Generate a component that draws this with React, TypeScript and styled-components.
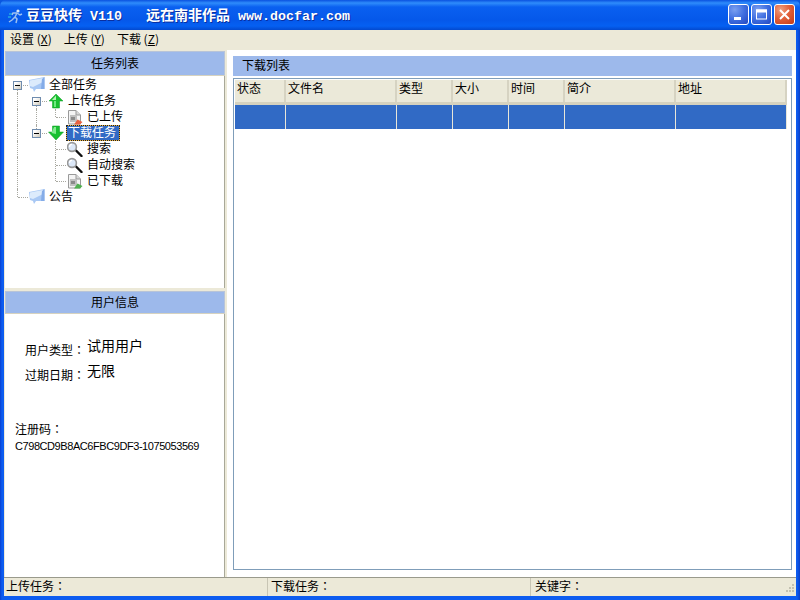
import React from "react";
import styled, { createGlobalStyle } from "styled-components";

const GlobalStyle = createGlobalStyle`
  html, body {
    margin: 0;
    padding: 0;
    background: #0a57e0;
  }
  * {
    box-sizing: border-box;
  }
`;

const UI_FONT = `"Noto Sans CJK SC", "Liberation Sans", sans-serif`;
const COLON_FONT = `"Noto Sans CJK TC", "Liberation Sans", sans-serif`;

const Window = styled.div`
  width: 800px;
  height: 600px;
  display: flex;
  flex-direction: column;
  overflow: hidden;
  padding: 0 4px 4px;
  background: linear-gradient(90deg, #0a3fd0 0, #0d5cf0 2px, #0d5cf0 calc(100% - 3px), #0a3fc8 100%);
  font: 12px/16px ${UI_FONT};
  color: #000;
  border-radius: 6px 6px 0 0;
`;

const TitleBar = styled.div`
  flex: 0 0 30px;
  margin: 0 -4px;
  padding: 1px 5px 0 7px;
  display: flex;
  align-items: center;
  background: linear-gradient(180deg, #0a52e0 0, #2f8cfb 3px, #0a60f0 7px, #0558ea 20px, #0560f2 26px, #0349cf 30px);
`;

const TitleIcon = styled.svg`
  width: 16px;
  height: 16px;
  flex: none;
  margin-right: 3px;
`;

const TitleText = styled.div`
  color: #fff;
  text-shadow: 1px 1px 0 #0a2fa0;
  white-space: pre;
  line-height: 18px;
`;

const TitleCjk = styled.span<{ $left?: number }>`
  font: bold 14px/18px "Noto Sans CJK SC", serif;
  margin-left: ${(p) => p.$left ?? 0}px;
`;

const TitleLatin = styled.span<{ $left: number }>`
  font: bold 13.33px/18px "Liberation Mono", monospace;
  margin-left: ${(p) => p.$left}px;
`;

const CaptionButtons = styled.div`
  margin-left: auto;
  display: flex;
  gap: 2px;
  margin-top: -2px;
`;

const CaptionButton = styled.div<{ $close?: boolean }>`
  width: 21px;
  height: 21px;
  border: 1px solid #fff;
  border-radius: 3px;
  display: flex;
  align-items: center;
  justify-content: center;
  background: ${(p) =>
    p.$close
      ? "radial-gradient(circle at 30% 25%, #f0a080 0, #e2603a 45%, #c23a16 100%)"
      : "radial-gradient(circle at 30% 25%, #7a9ff0 0, #3f6ee0 50%, #2348c0 100%)"};
`;

const MenuBar = styled.div`
  flex: 0 0 20px;
  display: flex;
  padding-left: 6px;
  gap: 12px;
  align-items: flex-start;
  background: #ece9d8;
`;

const MenuItem = styled.span`
  line-height: 18px;
  white-space: pre;
`;

const Mnemonic = styled.span`
  text-decoration: underline;
`;

const Body = styled.div`
  flex: 1;
  min-height: 0;
  display: flex;
  background: #ece9d8;
`;

const LeftColumn = styled.div`
  width: 221px;
  flex: none;
  padding: 1px 0 0 1px;
  display: flex;
  flex-direction: column;
`;

const PaneHeader = styled.div<{ $height: number }>`
  flex: 0 0 ${(p) => p.$height}px;
  background: #9db9eb;
  border: 1px solid #b8c4d8;
  border-bottom-color: #d6d2bf;
  text-align: center;
  line-height: ${(p) => p.$height - 4}px;
`;

const TreePane = styled.div`
  flex: 0 0 212px;
  background: #fff;
  padding: 1px 0 0 3px;
  border-right: 1px solid #a8a898;
`;

const Splitter = styled.div`
  flex: 0 0 3px;
`;

const TreeRow = styled.div`
  display: flex;
  height: 16px;
  align-items: center;
  white-space: nowrap;
`;

const Guide = styled.div<{ $up?: boolean; $down?: boolean; $right?: boolean }>`
  position: relative;
  flex: none;
  width: 19px;
  height: 16px;
  &::before {
    content: "";
    position: absolute;
    left: 9px;
    top: ${(p) => (p.$up ? 0 : 8)}px;
    bottom: ${(p) => (p.$down ? 0 : 8)}px;
    border-left: 1px dotted #a8a8a0;
  }
  &::after {
    content: "";
    position: absolute;
    left: 10px;
    top: 8px;
    width: ${(p) => (p.$right ? 10 : 0)}px;
    border-top: ${(p) => (p.$right ? "1px dotted #a8a8a0" : "none")};
  }
`;

const Expander = styled.div`
  position: absolute;
  left: 5px;
  top: 4px;
  width: 9px;
  height: 9px;
  border: 1px solid #6f8cae;
  background: linear-gradient(135deg, #fff 20%, #cfcabb);
  z-index: 1;
  &::after {
    content: "";
    position: absolute;
    left: 1px;
    top: 3px;
    width: 5px;
    height: 1px;
    background: #000;
  }
`;

const NodeIcon = styled.svg`
  position: relative;
  width: 16px;
  height: 16px;
  flex: none;
  margin-left: 2px;
`;

const NodeLabel = styled.span<{ $selected?: boolean }>`
  margin-left: 2px;
  padding: 0 4px 2px 2px;
  line-height: 14px;
  color: ${(p) => (p.$selected ? "#fff" : "#000")};
  background: ${(p) => (p.$selected ? "#316ac5" : "transparent")};
  box-shadow: ${(p) => (p.$selected ? "inset 0 0 0 1px #e8b040" : "none")};
  outline: ${(p) => (p.$selected ? "1px dotted #222" : "none")};
  outline-offset: -1px;
`;

const InfoPane = styled.div`
  flex: 1;
  background: #fff;
  padding: 24px 0 0 10px;
  border-right: 1px solid #a8a898;
  display: flex;
  flex-direction: column;
`;

const InfoRow = styled.div`
  display: flex;
  height: 25px;
  padding-left: 10px;
`;

const InfoKey = styled.span`
  width: 62px;
  padding-top: 4px;
  flex: none;
  font-family: ${COLON_FONT};
`;

const InfoValue = styled.span`
  font-size: 14px;
  line-height: 16px;
  margin-top: -1px;
`;

const RegKey = styled.div`
  margin-top: 33px;
  line-height: 16px;
  font-family: ${COLON_FONT};
`;

const RegCode = styled.div`
  font: 11px/14px "Liberation Sans", sans-serif;
  letter-spacing: -0.43px;
  margin-top: 2px;
`;

const RightColumn = styled.div`
  flex: 1;
  min-width: 0;
  margin-left: 2px;
  background: #fff;
  padding: 6px 4px 7px 6px;
  display: flex;
  flex-direction: column;
`;

const ListTitle = styled.div`
  flex: 0 0 20px;
  background: #9db9eb;
  padding-left: 9px;
  line-height: 18px;
`;

const ListView = styled.div`
  flex: 1;
  margin-top: 2px;
  border: 1px solid #7f9db9;
  padding: 1px;
  background: #fff;
`;

const ColumnHeader = styled.div`
  display: flex;
  height: 25px;
  width: 552px;
  background: #ebe9d9;
  border-bottom: 3px solid #d6d2bf;
`;

const HeaderCell = styled.div<{ $width: number }>`
  width: ${(p) => p.$width}px;
  flex: none;
  padding: 0 0 0 2px;
  border-right: 2px solid #d6d3c2;
  line-height: 16px;
`;

const SelectedRow = styled.div`
  display: flex;
  height: 24px;
  width: 552px;
  background: #316ac5;
`;

const RowCell = styled.div<{ $width: number }>`
  width: ${(p) => p.$width}px;
  flex: none;
  border-right: 1px solid #e8e6d8;
`;

const StatusBar = styled.div`
  flex: 0 0 19px;
  display: flex;
  position: relative;
  background: #ece9d8;
  border-top: 1px solid #9a9a8c;
  line-height: 15px;
  font-family: ${COLON_FONT};
`;

const StatusCell = styled.div<{ $width: number; $pad: number }>`
  width: ${(p) => p.$width}px;
  flex: none;
  padding-left: ${(p) => p.$pad}px;
  border-right: 1px solid #c8c5b4;
  white-space: nowrap;
`;

const StatusText = styled.span`
  flex: 1;
  padding-left: 4px;
`;

const Grip = styled.svg`
  position: absolute;
  right: 1px;
  bottom: 1px;
  width: 12px;
  height: 12px;
`;

const columns = [
  { label: "状态", width: 51 },
  { label: "文件名", width: 111 },
  { label: "类型", width: 56 },
  { label: "大小", width: 56 },
  { label: "时间", width: 56 },
  { label: "简介", width: 111 },
  { label: "地址", width: 111 },
];

const GlobeIcon = () => (
  <NodeIcon viewBox="0 0 16 16">
    <path d="M0 3 L15.5 0 L15.5 12 L7 12 L5 15 L4 12 L1 11 Z" fill="#a8c8f4" />
    <path d="M1 3.5 L14 1 L14 5 L4 10 L1 9 Z" fill="#dcebfc" />
    <path d="M15.5 0 L15.5 12 L12 12 L13 2 Z" fill="#84ace8" />
  </NodeIcon>
);

const UpArrow = () => (
  <NodeIcon viewBox="0 0 16 16">
    <path d="M8 1 L15 8 L11.5 8 L11.5 15 L4.5 15 L4.5 8 L1 8 Z" fill="#18c030" stroke="#0a9a20" strokeWidth="0.5" />
    <path d="M8 2.5 L4 7 L8 7 Z" fill="#b4f4b4" />
    <path d="M6 8 L8 8 L8 14 L6 14 Z" fill="#70e880" />
  </NodeIcon>
);

const DownArrow = () => (
  <NodeIcon viewBox="0 0 16 16">
    <path d="M4.5 1 L11.5 1 L11.5 7 L15.5 7 L8 15 L0.5 7 L4.5 7 Z" fill="#18c030" stroke="#0a9a20" strokeWidth="0.5" />
    <path d="M6 2 L8 2 L8 9 L3.5 8 Z" fill="#84ec90" />
  </NodeIcon>
);

const PageIcon = ({ badge }: { badge: string }) => (
  <NodeIcon viewBox="0 0 16 16">
    <path d="M1.5 1.5 L9 1.5 L13.5 6 L13.5 15 L1.5 15 Z" fill="#f4f4f4" stroke="#9a9a9a" />
    <path d="M9 1.5 L9 6 L13.5 6" fill="#d8d8d8" stroke="#9a9a9a" />
    <rect x="3" y="6" width="7" height="7" fill="#c0c0c0" />
    <rect x="4" y="8" width="4" height="3" fill="#8a8a8a" />
    <path d="M7 15.5 L10.5 10.5 L15.5 13 L13 15.5 Z" fill={badge} />
  </NodeIcon>
);

const SearchIcon = () => (
  <NodeIcon viewBox="0 0 16 16">
    <path d="M9 9.5 L14.5 15" stroke="#101010" strokeWidth="2.4" strokeLinecap="round" />
    <circle cx="5" cy="6" r="4.4" fill="#dce8f8" stroke="#989898" strokeWidth="1.6" />
    <path d="M2.5 6 A2.6 2.6 0 0 1 5 3.4" fill="none" stroke="#fff" strokeWidth="1.2" />
  </NodeIcon>
);

const AppIcon = () => (
  <TitleIcon viewBox="0 0 16 16">
    <circle cx="11" cy="3" r="1.6" fill="#d8e8f8" />
    <path d="M10 5 L13 7 L15 6 M10 5 L8 9 L10 11 L9 15 M8 9 L5 12 L2 14 M10 5 L6 5 L5 7" fill="none" stroke="#9cc0f0" strokeWidth="1.5" />
    <path d="M2 6 L5 6 M1 9 L4 9" stroke="#30d0e0" strokeWidth="1" />
  </TitleIcon>
);

export default function App() {
  return (
    <Window>
      <GlobalStyle />
      <TitleBar>
        <AppIcon />
        <TitleText>
          <TitleCjk>豆豆快传</TitleCjk>
          <TitleLatin $left={8}>V110</TitleLatin>
          <TitleCjk $left={24}>远在南非作品</TitleCjk>
          <TitleLatin $left={8}>www.docfar.com</TitleLatin>
        </TitleText>
        <CaptionButtons>
          <CaptionButton>
            <svg width="13" height="13" viewBox="0 0 13 13">
              <rect x="2" y="9" width="7" height="3" fill="#fff" />
            </svg>
          </CaptionButton>
          <CaptionButton>
            <svg width="13" height="13" viewBox="0 0 13 13">
              <rect x="1.5" y="2" width="10" height="9" fill="none" stroke="#fff" />
              <rect x="1" y="1.5" width="11" height="3" fill="#fff" />
            </svg>
          </CaptionButton>
          <CaptionButton $close>
            <svg width="13" height="13" viewBox="0 0 13 13">
              <path d="M2 2 L11 11 M11 2 L2 11" stroke="#fff" strokeWidth="2" />
            </svg>
          </CaptionButton>
        </CaptionButtons>
      </TitleBar>

      <MenuBar>
        <MenuItem>设置 (<Mnemonic>X</Mnemonic>)</MenuItem>
        <MenuItem>上传 (<Mnemonic>Y</Mnemonic>)</MenuItem>
        <MenuItem>下载 (<Mnemonic>Z</Mnemonic>)</MenuItem>
      </MenuBar>

      <Body>
        <LeftColumn>
          <PaneHeader $height={25}>任务列表</PaneHeader>
          <TreePane>
            <TreeRow>
              <Guide $down $right>
                <Expander />
              </Guide>
              <GlobeIcon />
              <NodeLabel>全部任务</NodeLabel>
            </TreeRow>
            <TreeRow>
              <Guide $up $down />
              <Guide $down $right>
                <Expander />
              </Guide>
              <UpArrow />
              <NodeLabel>上传任务</NodeLabel>
            </TreeRow>
            <TreeRow>
              <Guide $up $down />
              <Guide $up $down />
              <Guide $up $right />
              <PageIcon badge="#e86040" />
              <NodeLabel>已上传</NodeLabel>
            </TreeRow>
            <TreeRow>
              <Guide $up $down />
              <Guide $up $right>
                <Expander />
              </Guide>
              <DownArrow />
              <NodeLabel $selected>下载任务</NodeLabel>
            </TreeRow>
            <TreeRow>
              <Guide $up $down />
              <Guide />
              <Guide $up $down $right />
              <SearchIcon />
              <NodeLabel>搜索</NodeLabel>
            </TreeRow>
            <TreeRow>
              <Guide $up $down />
              <Guide />
              <Guide $up $down $right />
              <SearchIcon />
              <NodeLabel>自动搜索</NodeLabel>
            </TreeRow>
            <TreeRow>
              <Guide $up $down />
              <Guide />
              <Guide $up $right />
              <PageIcon badge="#50b050" />
              <NodeLabel>已下载</NodeLabel>
            </TreeRow>
            <TreeRow>
              <Guide $up $right />
              <GlobeIcon />
              <NodeLabel>公告</NodeLabel>
            </TreeRow>
          </TreePane>
          <Splitter />
          <PaneHeader $height={23}>用户信息</PaneHeader>
          <InfoPane>
            <InfoRow>
              <InfoKey>用户类型：</InfoKey>
              <InfoValue>试用用户</InfoValue>
            </InfoRow>
            <InfoRow>
              <InfoKey>过期日期：</InfoKey>
              <InfoValue>无限</InfoValue>
            </InfoRow>
            <RegKey>注册码：</RegKey>
            <RegCode>C798CD9B8AC6FBC9DF3-1075053569</RegCode>
          </InfoPane>
        </LeftColumn>

        <RightColumn>
          <ListTitle>下载列表</ListTitle>
          <ListView>
            <ColumnHeader>
              {columns.map((c) => (
                <HeaderCell key={c.label} $width={c.width}>
                  {c.label}
                </HeaderCell>
              ))}
            </ColumnHeader>
            <SelectedRow>
              {columns.map((c) => (
                <RowCell key={c.label} $width={c.width} />
              ))}
            </SelectedRow>
          </ListView>
        </RightColumn>
      </Body>

      <StatusBar>
        <StatusCell $width={264} $pad={2}>上传任务：</StatusCell>
        <StatusCell $width={263} $pad={3}>下载任务：</StatusCell>
        <StatusText>关键字：</StatusText>
        <Grip viewBox="0 0 12 12">
          <path d="M9 1h2v2H9zM6 4h2v2H6zM9 4h2v2H9zM3 7h2v2H3zM6 7h2v2H6zM9 7h2v2H9z" fill="#c4c1b0" />
        </Grip>
      </StatusBar>
    </Window>
  );
}
